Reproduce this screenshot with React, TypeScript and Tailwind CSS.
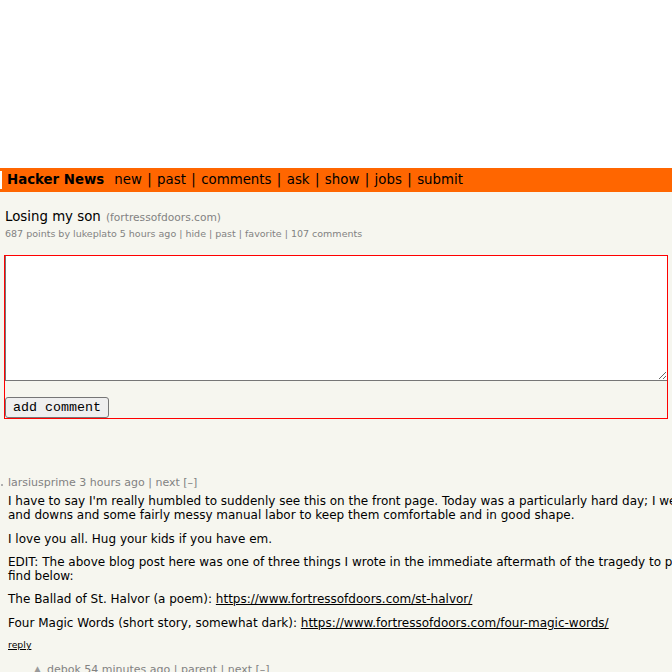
import React from "react";

const sans = "font-['DejaVu_Sans',Verdana,sans-serif]";

const navLinks = ["new", "past", "comments", "ask", "show", "jobs", "submit"];

function Header() {
  return (
    <div className="flex h-[24px] items-center bg-[#ff6600] text-black">
      {/* logo box, mostly off the left edge */}
      <span className="h-[18px] w-[2px] bg-white" />
      <b className="ml-[5px] text-[13.33px]">Hacker News</b>
      <span className="ml-[10px] flex text-[13.33px]">
        {navLinks.map((l, i) => (
          <span key={l} className="flex">
            {i > 0 && <span className="mx-[5.4px]">|</span>}
            {l}
          </span>
        ))}
      </span>
    </div>
  );
}

function Story() {
  return (
    <div className="pl-[5px] pt-[16px]">
      <div className="leading-[16px]">
        <span className="text-[13.33px] text-black">Losing my son</span>{" "}
        <span className="text-[10.67px] text-[#828282]">(fortressofdoors.com)</span>
      </div>
      <div className="mt-[2px] text-[9.5px] leading-[12px] text-[#828282]">
        687 points by lukeplato 5 hours ago | hide | past | favorite | 107 comments
      </div>
    </div>
  );
}

function ReplyForm() {
  return (
    <div className="ml-[4px] mr-[4px] mt-[15px] border border-[#ff0000]">
      <textarea className="block h-[125px] w-full border-b border-l border-[#767676] bg-white" />
      <button className="mt-[16px] block h-[21px] rounded-[3px] border border-[#767676] bg-[#efefef] px-[7px] font-['Liberation_Mono',monospace] text-[13.33px] leading-[17px] text-black">
        add comment
      </button>
    </div>
  );
}

function Comment() {
  return (
    <div className="mt-[57px] overflow-hidden">
      <div className="relative pl-[8px] text-[11px] leading-[13px] text-[#828282]">
        <span className="absolute left-[1px] top-[8px] h-[2px] w-[2px] bg-[#b0b0b0]" />
        larsiusprime 3 hours ago | next [–]
      </div>
      <div className="mt-[5px] whitespace-nowrap pl-[8px] text-[12px] leading-[14.3px] text-black">
        <p>
          I have to say I'm really humbled to suddenly see this on the front page. Today was a particularly hard day; I went through a lot of ups
          <br />
          and downs and some fairly messy manual labor to keep them comfortable and in good shape.
        </p>
        <p className="mt-[9px]">I love you all. Hug your kids if you have em.</p>
        <p className="mt-[9px]">
          EDIT: The above blog post here was one of three things I wrote in the immediate aftermath of the tragedy to process it, which you can
          <br />
          find below:
        </p>
        <p className="mt-[9px]">
          The Ballad of St. Halvor (a poem):{" "}
          <a className="underline">https://www.fortressofdoors.com/st-halvor/</a>
        </p>
        <p className="mt-[9px]">
          Four Magic Words (short story, somewhat dark):{" "}
          <a className="underline">https://www.fortressofdoors.com/four-magic-words/</a>
        </p>
        <p className="mt-[9px] text-[9.33px] leading-[12px]">
          <a className="underline">reply</a>
        </p>
      </div>
      <div className="mt-[12px] flex items-center pl-[34px] text-[11px] leading-[13px] text-[#828282]">
        <span className="mr-[6px] text-[9px] text-[#9a9a9a]">▲</span>
        debok 54 minutes ago | parent | next [–]
      </div>
    </div>
  );
}

export default function App() {
  return (
    <div className={`h-[672px] w-[672px] overflow-hidden bg-white ${sans}`}>
      <div className="h-[168px]" />
      <Header />
      <div className="h-[480px] bg-[#f6f6ef]">
        <Story />
        <ReplyForm />
        <Comment />
      </div>
    </div>
  );
}
